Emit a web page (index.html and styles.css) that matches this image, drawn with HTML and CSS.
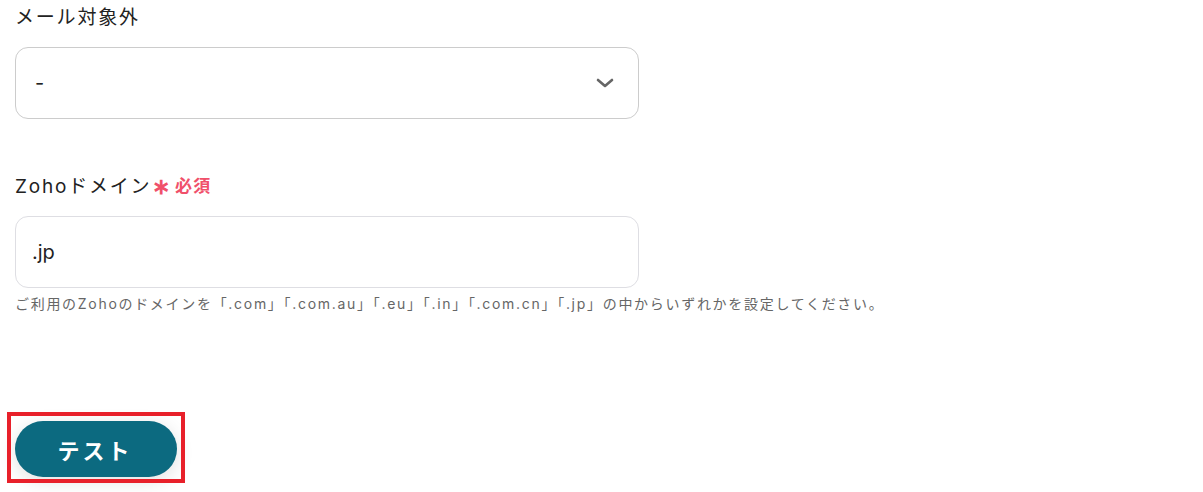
FILE: index.html
```html
<!DOCTYPE html>
<html lang="ja">
<head>
<meta charset="utf-8">
<title>Zoho設定</title>
<link rel="stylesheet" href="styles.css">
</head>
<body>
<main class="form">
  <section class="field">
    <div class="label">メール対象外</div>
    <div class="select">
      <span class="value">-</span>
      <svg class="chevron" width="18" height="12" viewBox="0 0 18 12"><path d="M2 3 L9 9 L16 3" fill="none" stroke="#666" stroke-width="2.6" stroke-linecap="round" stroke-linejoin="round"/></svg>
    </div>
  </section>
  <section class="field field-domain">
    <div class="label">Zohoドメイン<span class="req"><span class="ast">∗</span>必須</span></div>
    <div class="input"><span class="value">.jp</span></div>
    <p class="help">ご利用のZohoのドメインを「.com」「.com.au」「.eu」「.in」「.com.cn」「.jp」の中からいずれかを設定してください。</p>
  </section>
  <div class="actions">
    <button class="btn">テスト</button>
  </div>
</main>
</body>
</html>
```

FILE: styles.css
```css
* { box-sizing: border-box; }
html, body { margin: 0; background: #fff; }
body {
  font-family: Inter, "Noto Sans CJK JP", sans-serif;
  color: #333;
  min-height: 492px;
}
.form {
  padding: 4px 15px 20px 15px;
  width: 654px;
}
.field { display: flex; flex-direction: column; }
.label {
  font-size: 19px;
  line-height: 27px;
  font-weight: 400;
  letter-spacing: 1.8px;
  color: #222;
  margin-bottom: 16px;
  display: flex;
  align-items: center;
}
.req {
  color: #f0506a;
  font-size: 17px;
  font-weight: 700;
  margin-left: 1px;
  letter-spacing: 1.5px;
  display: inline-flex;
  align-items: center;
}
.ast { font-size: 22px; margin-right: 3px; font-weight: 700; }
.select, .input {
  height: 72px;
  border: 1px solid #cccccc;
  border-radius: 13px;
  display: flex;
  align-items: center;
  padding: 0 19px;
  font-size: 20px;
}
.input { border-color: #dedee3; padding: 0 16px; }
.select { justify-content: space-between; padding-right: 24px; }
.value { color: #222; }
.field-domain { margin-top: 54px; }
.help {
  margin: 5px 0 0;
  font-size: 14px;
  line-height: 21px;
  letter-spacing: 1.7px;
  color: #666;
  white-space: nowrap;
}
.actions { margin-top: 107px; display: flex; }
.btn {
  position: relative;
  width: 162px;
  height: 56px;
  border: none;
  border-radius: 28px;
  background: #0c6a80;
  color: #fff;
  font-family: inherit;
  font-size: 22px;
  font-weight: 700;
  letter-spacing: 3px;
  padding-left: 4px;
  box-shadow: 0 4px 18px rgba(0,0,0,0.12);
}
.btn::after {
  content: "";
  position: absolute;
  inset: -9px -8px -6px -8px;
  border: 4px solid #e8202a;
}
```
